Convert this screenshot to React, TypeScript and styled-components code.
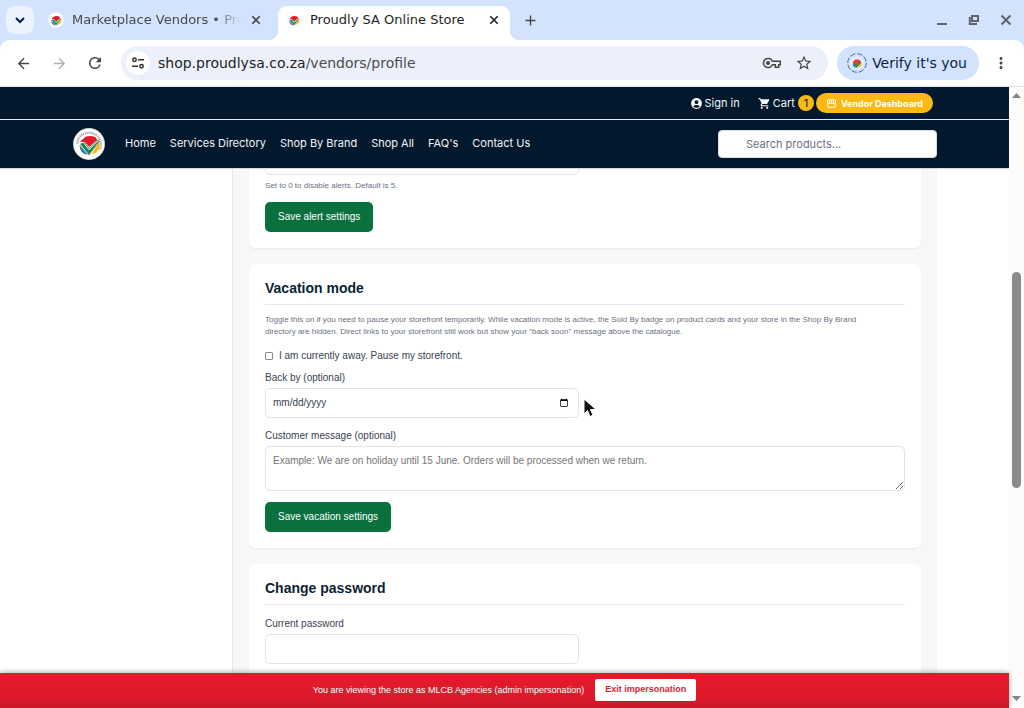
import React, { useId } from "react";
import styled, { createGlobalStyle, css } from "styled-components";
import {
  MdAccountCircle,
  MdArrowBack,
  MdArrowForward,
  MdMoreVert,
  MdOutlineStorefront,
  MdRefresh,
  MdShoppingCart,
  MdStarBorder,
  MdAdd,
} from "react-icons/md";

const GlobalStyle = createGlobalStyle`
  *, *::before, *::after { box-sizing: border-box; }
  html, body { margin: 0; }
  body { overflow: hidden; background: #fff; }
  button, input, textarea { font-family: inherit; margin: 0; }
  h2, p { margin: 0; }
  a { color: inherit; text-decoration: none; }
`;

const chromeFont = `"DejaVu Sans", "Noto Sans", sans-serif`;
const bodyFont = `"Liberation Sans", Arial, sans-serif`;
const navFont = `Inter, "Liberation Sans", sans-serif`;

const Window = styled.div`
  height: 100vh;
  display: flex;
  flex-direction: column;
  background: #d3e3fd;
`;

/* Browser frame */

const TabStrip = styled.div`
  flex: none;
  height: 40px;
  padding: 6px 11px 0 6px;
  display: flex;
  font-family: ${chromeFont};
`;

const TabSearch = styled.button`
  width: 28px;
  height: 28px;
  margin-right: 6px;
  padding: 0;
  border: 0;
  border-radius: 9px;
  background: #edf3fe;
  color: #0b1d45;
  display: grid;
  place-items: center;
`;

const TabTitle = styled.span`
  flex: 1;
  min-width: 0;
  overflow: hidden;
  white-space: nowrap;
  line-height: 18px;
`;

const TabItem = styled.div<{ $active?: boolean }>`
  position: relative;
  flex: 0 1 232px;
  min-width: 0;
  margin-right: 6px;
  padding: 0 9px 6px 8px;
  display: flex;
  align-items: center;
  gap: 8px;
  font-size: 13px;
  color: #47494c;
  ${(p) =>
    p.$active
      ? css`
          background: #fff;
          color: #1f1f1f;
          border-radius: 9px 9px 0 0;
          &::before,
          &::after {
            content: "";
            position: absolute;
            bottom: 0;
            width: 9px;
            height: 9px;
          }
          &::before {
            right: 100%;
            background: radial-gradient(circle at 0 0, transparent 9px, #fff 9px);
          }
          &::after {
            left: 100%;
            background: radial-gradient(circle at 100% 0, transparent 9px, #fff 9px);
          }
        `
      : css`
          ${TabTitle} {
            mask-image: linear-gradient(to right, #000 calc(100% - 26px), transparent);
          }
        `}
`;

const IconButton = styled.button<{ $size?: number; $color?: string }>`
  flex: none;
  width: ${(p) => p.$size ?? 28}px;
  height: ${(p) => p.$size ?? 28}px;
  padding: 0;
  border: 0;
  background: none;
  color: ${(p) => p.$color ?? "#474747"};
  display: grid;
  place-items: center;
`;

const WindowControls = styled.div`
  margin-left: auto;
  height: 28px;
  display: flex;
  align-items: center;
  gap: 18px;
`;

const Toolbar = styled.div`
  flex: none;
  height: 47px;
  padding: 0 9px;
  display: flex;
  align-items: center;
  background: #fff;
  border-bottom: 1px solid #dfe2e3;
  border-radius: 9px 9px 0 0;
  font-family: ${chromeFont};
`;

const HistoryButtons = styled.div`
  display: flex;
  gap: 8px;
  margin-right: 12px;
`;

const AddressBar = styled.div`
  flex: 1;
  min-width: 0;
  height: 34px;
  padding: 0 10px 0 5px;
  display: flex;
  align-items: center;
  gap: 4px;
  border-radius: 17px;
  background: #ecf0fa;
`;

const SiteInfo = styled.button`
  flex: none;
  width: 24px;
  height: 24px;
  margin-right: 4px;
  padding: 0;
  border: 0;
  border-radius: 50%;
  background: #fff;
  display: grid;
  place-items: center;
`;

const Url = styled.span`
  flex: 1;
  min-width: 0;
  overflow: hidden;
  white-space: nowrap;
  font-size: 14px;
  line-height: 20px;
  color: #4a4c50;
`;

const UrlHost = styled.span`
  color: #1f1f1f;
`;

const ProfileChip = styled.button`
  flex: none;
  height: 34px;
  margin: 0 8px 0 9px;
  padding: 0 12px 0 10px;
  border: 0;
  border-radius: 17px;
  background: #d3e3fd;
  color: #0c1f47;
  display: flex;
  align-items: center;
  gap: 5px;
  font-size: 14px;
`;

/* Page */

const Viewport = styled.div`
  flex: 1;
  min-height: 0;
  display: flex;
  background: #fff;
`;

const Page = styled.div`
  flex: 1;
  min-width: 0;
  display: flex;
  flex-direction: column;
  font-family: ${bodyFont};
  color: #374151;
`;

const Header = styled.header`
  flex: none;
  background: #02182d;
  color: #f3f4f6;
  border-bottom: 1px solid #d5d9df;
  font-family: ${navFont};
  font-size: 11px;
`;

const Container = styled.div`
  width: calc(100% - 32px);
  max-width: 865px;
  margin: 0 auto;
  display: flex;
  align-items: center;
`;

const TopBar = styled.div`
  border-bottom: 1px solid #e5e7eb;
`;

const TopLinks = styled(Container)`
  height: 32px;
  padding-right: 4px;
  justify-content: flex-end;
`;

const TopLink = styled.a`
  display: flex;
  align-items: center;
  gap: 2px;
  margin-right: 18px;
`;

const CartLink = styled(TopLink)`
  margin-right: 2px;
`;

const CartCount = styled.span`
  width: 16px;
  height: 16px;
  margin-left: 1px;
  border-radius: 50%;
  background: #fdb913;
  color: #02182d;
  display: grid;
  place-items: center;
`;

const VendorLink = styled.a`
  height: 20px;
  padding: 0 10px;
  border-radius: 10px;
  background: #fdb913;
  color: #fff;
  display: flex;
  align-items: center;
  gap: 4px;
  font-size: 9px;
  font-weight: 700;
`;

const NavBar = styled(Container)`
  height: 48px;
`;

const LogoLink = styled.a`
  display: flex;
  margin: 0 20px 0 1px;
`;

const Nav = styled.nav`
  padding-bottom: 2px;
  display: flex;
  gap: 14px;
`;

const SearchInput = styled.input`
  width: 219px;
  height: 28px;
  margin-left: auto;
  padding: 0 8px 0 27px;
  border: 1px solid #d9dde2;
  border-radius: 4px;
  background: #fff;
  font-size: 11px;
  color: #374151;
  &::placeholder {
    color: #6b7280;
    opacity: 1;
  }
`;

const Scroller = styled.div`
  flex: 1;
  min-height: 0;
  overflow: hidden;
`;

const Columns = styled(Container)`
  align-items: stretch;
  min-height: 100%;
`;

const Sidebar = styled.aside`
  flex: none;
  width: 160px;
`;

const Main = styled.main`
  flex: 1;
  min-width: 0;
  padding: 0 16px;
  border-left: 1px solid #e3e6ea;
  background: #f6f7f9;
  display: flex;
  flex-direction: column;
  gap: 16px;
`;

const Card = styled.section<{ $scrolled?: boolean }>`
  padding: 16px;
  border-radius: 6px;
  background: #fff;
  box-shadow: 0 1px 2px rgba(0, 0, 0, 0.06);
  ${(p) =>
    p.$scrolled &&
    css`
      margin-top: -40px;
    `}
`;

const CardTitle = styled.h2`
  padding-bottom: 7px;
  border-bottom: 1px solid #e5e7eb;
  font-size: 14px;
  line-height: 17px;
  color: #0b1f33;
`;

const Help = styled.p`
  font-size: 8px;
  line-height: 12px;
  color: #6b7280;
`;

const Intro = styled(Help)`
  margin: 9px 0 12px;
`;

const CheckRow = styled.label`
  display: flex;
  align-items: center;
  gap: 6px;
  font-size: 10px;
  line-height: 12px;
  margin-bottom: 9px;
`;

const CheckBox = styled.input`
  width: 8px;
  height: 8px;
  appearance: none;
  border: 1px solid #8b8b8b;
  border-radius: 1px;
`;

const Field = styled.div<{ $wide?: boolean; $first?: boolean }>`
  position: relative;
  width: ${(p) => (p.$wide ? "100%" : "calc(50% - 6px)")};
  margin-top: ${(p) => (p.$first ? 12 : 0)}px;
  margin-bottom: 11px;
`;

const Label = styled.label`
  display: block;
  padding-top: 1px;
  margin-bottom: 4px;
  font-size: 10px;
  line-height: 12px;
`;

const control = css`
  display: block;
  width: 100%;
  border: 1px solid #e0e3e7;
  border-radius: 5px;
  background: #fff;
  font-size: 10px;
  color: #374151;
`;

const Input = styled.input`
  ${control}
  height: 30px;
  padding: 0 7px 1px;
  &::-webkit-datetime-edit-month-field,
  &::-webkit-datetime-edit-day-field,
  &::-webkit-datetime-edit-year-field {
    padding: 0;
  }
`;

const TextArea = styled.textarea`
  ${control}
  height: 45px;
  padding: 8px 7px;
  line-height: 12px;
  resize: vertical;
  &::placeholder {
    color: #757575;
  }
`;

const SaveButton = styled.button`
  display: block;
  height: 30px;
  padding: 0 13px 2px;
  border: 0;
  border-radius: 5px;
  background: #0a703e;
  color: #fff;
  font-size: 10px;
`;

const AlertHelp = styled(Help)`
  margin: -6px 0 10px;
`;

const Pointer = styled.svg`
  position: absolute;
  left: calc(100% + 4px);
  bottom: 0;
`;

const Banner = styled.div`
  flex: none;
  position: relative;
  min-height: 35px;
  padding: 6px 16px 7px;
  display: flex;
  align-items: center;
  justify-content: center;
  gap: 11px;
  background: linear-gradient(#e21b2c 0, #e01a2b 55%, #cc1726 100%);
  box-shadow: 0 -1px 5px rgba(0, 0, 0, 0.3);
  color: #fff;
  font-size: 9px;
`;

const ExitButton = styled.button`
  height: 22px;
  padding: 0 10px 2px;
  border: 0;
  border-radius: 2px;
  background: #fff;
  color: #d81e30;
  font-size: 9px;
  font-weight: 700;
`;

const ScrollBar = styled.div`
  flex: none;
  width: 15px;
  padding: 6px 0 7px;
  background: #fcfcfc;
  display: flex;
  flex-direction: column;
  align-items: center;
`;

const ScrollTrack = styled.div`
  flex: 1;
  width: 9px;
  display: flex;
  flex-direction: column;
`;

const TrackSpace = styled.div<{ $grow: number }>`
  flex: ${(p) => p.$grow} 1 0;
`;

const Thumb = styled.div`
  flex: 216 1 0;
  border-radius: 5px;
  background: #8b8b8b;
`;

function Emblem({ size, ring = false }: { size: number; ring?: boolean }) {
  const id = useId();
  return (
    <svg width={size} height={size} viewBox="0 0 32 32" aria-hidden="true">
      <circle cx="16" cy="16" r="15.700" fill="#fff" stroke="#d8d8d8" strokeWidth=".6" />
      {ring && (
        <path
          id={id}
          d="M4.500 15.500C4.500 9 9.500 4.800 16 4.800c7.500 0 12.500 6 11.800 12.700l-1 4.500"
          fill="none"
          stroke="#97999c"
          strokeWidth="2.400"
          strokeDasharray="1 .9"
        />
      )}
      <path d="M6.800 13.800 13 8.600q5-1.200 9.500.6l1.800 2.600-8 7.200-4.500-5z" fill="#e8182c" />
      <path d="M6.500 17.500 14.800 27q-7.800-1.500-8.300-9.500z" fill="#1769c5" />
      <path d="M26.200 13.500q2.800 10-8 13.200z" fill="#fdb913" />
      <path d="M7 15.800l4.800-1.300 4.500 5.700 8.200-8.400 1.700.7L16 26.500z" fill="#13834a" />
      <path d="M11.200 15.500l4.900 6.300 8.800-9.300" fill="none" stroke="#fff" strokeWidth="1" />
      <path d="M6.800 17 16 27 26.600 13" fill="none" stroke="#1b2a24" strokeWidth=".5" />
    </svg>
  );
}

function ChipEmblem() {
  return (
    <svg width="20" height="20" viewBox="0 0 20 20" aria-hidden="true">
      <circle cx="10" cy="10" r="9.300" fill="none" stroke="#4568a8" strokeWidth="1" strokeDasharray="5.300 2" />
      <circle cx="10" cy="10" r="6.500" fill="#e9eef5" />
      <path d="M5.500 9.500 8 6.500h4l2 2-4 5z" fill="#e8432c" />
      <path d="M5.500 10.500 10 14.800l-2-.3q-2.500-1-2.500-4z" fill="#2a6fc0" />
      <path d="M14.500 9.500q1 4.500-4 5.500z" fill="#fdb913" />
      <path d="M6.500 10.500l3.300 3 4-4.500" fill="none" stroke="#178a4c" strokeWidth="1.500" />
    </svg>
  );
}

function CrossIcon() {
  return (
    <svg width="14" height="14" viewBox="0 0 14 14" aria-hidden="true">
      <path d="M3.300 3.300l7.400 7.400M10.700 3.300l-7.400 7.400" stroke="currentColor" strokeWidth="1.600" />
    </svg>
  );
}

function TuneIcon() {
  return (
    <svg width="14" height="14" viewBox="0 0 14 14" fill="none" stroke="#303134" strokeWidth="1.500" aria-hidden="true">
      <circle cx="3.500" cy="3.800" r="1.700" />
      <path d="M7 3.800h6M1 10.200h6" />
      <circle cx="10.500" cy="10.200" r="1.700" />
    </svg>
  );
}

function KeyIcon() {
  return (
    <svg width="20" height="14" viewBox="0 0 20 14" fill="none" stroke="#474747" strokeWidth="1.500" aria-hidden="true">
      <path d="M10.300 5.200h8v3.600h-1.600v2.400h-3.400V8.800h-3a4.600 4.600 0 1 1 0-3.600z" />
      <circle cx="6" cy="7" r="1.300" fill="#474747" />
    </svg>
  );
}

function App() {
  return (
    <Window>
      <GlobalStyle />
      <TabStrip>
        <TabSearch aria-label="Search tabs">
          <svg width="12" height="12" viewBox="0 0 12 12">
            <path d="M2 4l4 4 4-4" fill="none" stroke="currentColor" strokeWidth="2" />
          </svg>
        </TabSearch>
        <TabItem>
          <Emblem size={16} />
          <TabTitle>Marketplace Vendors • Proudly SA</TabTitle>
          <IconButton $size={14} aria-label="Close tab">
            <CrossIcon />
          </IconButton>
        </TabItem>
        <TabItem $active>
          <Emblem size={16} />
          <TabTitle>Proudly SA Online Store</TabTitle>
          <IconButton $size={14} $color="#1f1f1f" aria-label="Close tab">
            <CrossIcon />
          </IconButton>
        </TabItem>
        <IconButton aria-label="New tab">
          <MdAdd size={17} />
        </IconButton>
        <WindowControls>
          <IconButton $size={14} aria-label="Minimize">
            <svg width="14" height="14" viewBox="0 0 14 14">
              <path d="M2 11h10" stroke="#5f6368" strokeWidth="2" />
            </svg>
          </IconButton>
          <IconButton $size={14} aria-label="Restore">
            <svg width="14" height="14" viewBox="0 0 14 14" fill="none" stroke="#5f6368" strokeWidth="2">
              <path d="M5 3h6v5H5z" />
              <path d="M2.800 4v7H10" />
            </svg>
          </IconButton>
          <IconButton $size={14} aria-label="Close window">
            <svg width="14" height="14" viewBox="0 0 14 14">
              <path d="M2.500 2.500l9 9M11.500 2.500l-9 9" stroke="#5f6368" strokeWidth="2" />
            </svg>
          </IconButton>
        </WindowControls>
      </TabStrip>

      <Toolbar>
        <HistoryButtons>
          <IconButton aria-label="Back">
            <MdArrowBack size={17} />
          </IconButton>
          <IconButton $color="#b0b0b0" aria-label="Forward">
            <MdArrowForward size={17} />
          </IconButton>
          <IconButton aria-label="Reload">
            <MdRefresh size={18} />
          </IconButton>
        </HistoryButtons>
        <AddressBar>
          <SiteInfo aria-label="Site information">
            <TuneIcon />
          </SiteInfo>
          <Url>
            <UrlHost>shop.proudlysa.co.za</UrlHost>/vendors/profile
          </Url>
          <IconButton aria-label="Passwords">
            <KeyIcon />
          </IconButton>
          <IconButton aria-label="Bookmark">
            <MdStarBorder size={18} />
          </IconButton>
        </AddressBar>
        <ProfileChip>
          <ChipEmblem />
          Verify it's you
        </ProfileChip>
        <IconButton aria-label="Menu">
          <MdMoreVert size={18} />
        </IconButton>
      </Toolbar>

      <Viewport>
        <Page>
          <Header>
            <TopBar>
              <TopLinks>
                <TopLink href="#signin">
                  <MdAccountCircle size={13} />
                  Sign in
                </TopLink>
                <CartLink href="#cart">
                  <MdShoppingCart size={13} />
                  Cart
                  <CartCount>1</CartCount>
                </CartLink>
                <VendorLink href="#dashboard">
                  <MdOutlineStorefront size={11} />
                  Vendor Dashboard
                </VendorLink>
              </TopLinks>
            </TopBar>
            <NavBar>
              <LogoLink href="#home" aria-label="Proudly SA">
                <Emblem size={32} ring />
              </LogoLink>
              <Nav>
                <a href="#home">Home</a>
                <a href="#services">Services Directory</a>
                <a href="#brands">Shop By Brand</a>
                <a href="#shop">Shop All</a>
                <a href="#faq">FAQ's</a>
                <a href="#contact">Contact Us</a>
              </Nav>
              <SearchInput type="search" aria-label="Search products" placeholder="Search products..." />
            </NavBar>
          </Header>

          <Scroller>
            <Columns>
              <Sidebar />
              <Main>
                <Card $scrolled>
                  <Field>
                    <Input type="number" aria-label="Low stock alert threshold" />
                  </Field>
                  <AlertHelp>Set to 0 to disable alerts. Default is 5.</AlertHelp>
                  <SaveButton type="button">Save alert settings</SaveButton>
                </Card>

                <Card>
                  <CardTitle>Vacation mode</CardTitle>
                  <Intro>
                    Toggle this on if you need to pause your storefront temporarily. While vacation mode is active, the
                    Sold By badge on product cards and your store in the Shop By Brand
                    <br />
                    directory are hidden. Direct links to your storefront still work but show your "back soon" message
                    above the catalogue.
                  </Intro>
                  <CheckRow>
                    <CheckBox type="checkbox" />I am currently away. Pause my storefront.
                  </CheckRow>
                  <Field>
                    <Label htmlFor="back-by">Back by (optional)</Label>
                    <Input id="back-by" type="date" />
                    <Pointer width="14" height="20" viewBox="0 0 14 20" aria-hidden="true">
                      <path
                        d="M1 1v15l3.500-3.500L7 18.500l3-1.300L7.500 11.500H13z"
                        fill="#111"
                        stroke="#fff"
                        strokeWidth="1"
                      />
                    </Pointer>
                  </Field>
                  <Field $wide>
                    <Label htmlFor="message">Customer message (optional)</Label>
                    <TextArea
                      id="message"
                      placeholder="Example: We are on holiday until 15 June. Orders will be processed when we return."
                    />
                  </Field>
                  <SaveButton type="button">Save vacation settings</SaveButton>
                </Card>

                <Card>
                  <CardTitle>Change password</CardTitle>
                  <Field $first>
                    <Label htmlFor="current-password">Current password</Label>
                    <Input id="current-password" type="password" />
                  </Field>
                </Card>
              </Main>
            </Columns>
          </Scroller>

          <Banner role="status">
            <span>You are viewing the store as MLCB Agencies (admin impersonation)</span>
            <ExitButton type="button">Exit impersonation</ExitButton>
          </Banner>
        </Page>

        <ScrollBar aria-hidden="true">
          <svg width="9" height="5" viewBox="0 0 9 5">
            <path d="M4.500 0 9 5H0z" fill="#858585" />
          </svg>
          <ScrollTrack>
            <TrackSpace $grow={174} />
            <Thumb />
            <TrackSpace $grow={208} />
          </ScrollTrack>
          <svg width="9" height="5" viewBox="0 0 9 5">
            <path d="M0 0h9L4.500 5z" fill="#858585" />
          </svg>
        </ScrollBar>
      </Viewport>
    </Window>
  );
}

export default App;
